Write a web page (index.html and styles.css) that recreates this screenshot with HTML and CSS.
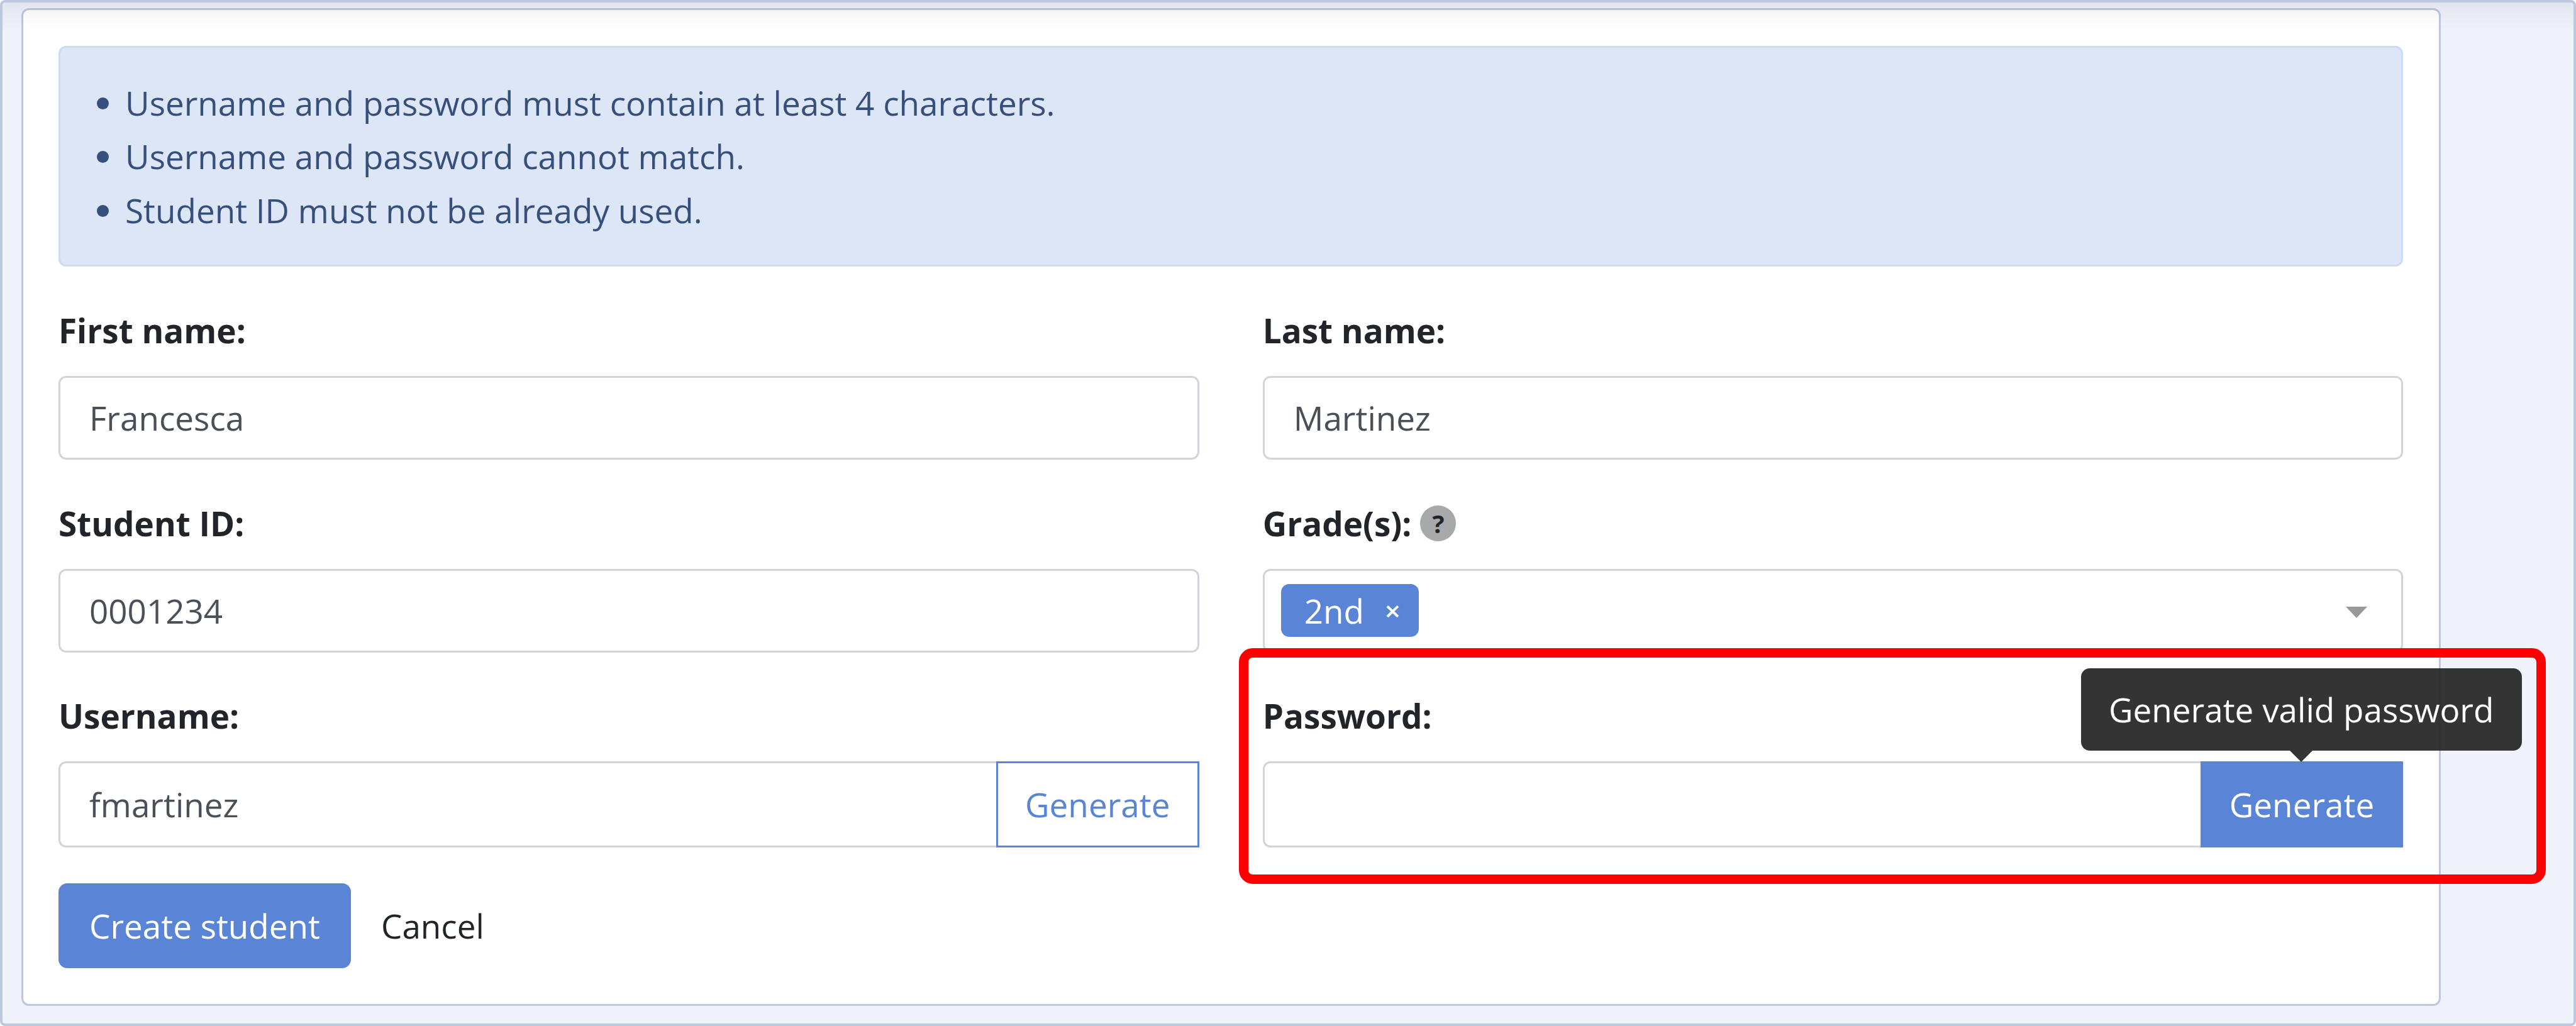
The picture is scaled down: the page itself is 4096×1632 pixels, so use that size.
FILE: index.html
```html
<!DOCTYPE html>
<html lang="en">
<head>
<meta charset="utf-8">
<title>Create student</title>
<link rel="stylesheet" href="styles.css">
</head>
<body>
<div class="frame">
  <main class="card">
    <div class="alert">
      <ul class="rules">
        <li>Username and password must contain at least 4 characters.</li>
        <li>Username and password cannot match.</li>
        <li>Student ID must not be already used.</li>
      </ul>
    </div>
    <form class="form">
      <div class="grid">
        <div class="field">
          <label class="label">First name:</label>
          <input class="input" type="text" value="Francesca">
        </div>
        <div class="field">
          <label class="label">Last name:</label>
          <input class="input" type="text" value="Martinez">
        </div>
        <div class="field">
          <label class="label">Student ID:</label>
          <input class="input" type="text" value="0001234">
        </div>
        <div class="field">
          <label class="label">Grade(s): <span class="help">?</span></label>
          <div class="select">
            <span class="chip"><span class="chip-text">2nd</span><span class="chip-x">×</span></span>
            <span class="caret"></span>
          </div>
        </div>
        <div class="field">
          <label class="label">Username:</label>
          <div class="group">
            <input class="input group-input" type="text" value="fmartinez">
            <button class="gen gen-outline" type="button">Generate</button>
          </div>
        </div>
        <div class="field">
          <label class="label">Password:</label>
          <div class="group">
            <input class="input group-input" type="text">
            <button class="gen gen-solid" type="button">Generate</button>
            <div class="tooltip">Generate valid password</div>
          </div>
        </div>
      </div>
      <div class="actions">
        <button class="create" type="button">Create student</button>
        <a class="cancel">Cancel</a>
      </div>
    </form>
  </main>
  <div class="highlight"></div>
  <div class="sheen"></div>
</div>
</body>
</html>
```
FILE: styles.css
```css
* { box-sizing: border-box; }
html, body { margin: 0; padding: 0; background: #ffffff; }
body {
  font-family: "Open Sans", "Noto Sans", "Liberation Sans", sans-serif;
  font-size: 53px;
  color: #212529;
}
.frame {
  position: relative;
  width: 4096px;
  height: 1632px;
  padding: 8.75px 0 0 29.75px;
  background: #eff2fb;
  border: 4px solid #bfc7e0;
  border-radius: 8px;
  overflow: hidden;
}
.sheen {
  position: absolute;
  left: 0;
  right: 0;
  top: 0;
  height: 44px;
  background: linear-gradient(rgba(0,0,0,.05), rgba(0,0,0,0));
  pointer-events: none;
}
.card {
  width: 3846.75px;
  height: 1587.25px;
  padding: 57px 56.25px 0;
  background: #ffffff;
  border: 3px solid #bfc7e0;
  border-radius: 12px;
}
.alert {
  height: 351px;
  margin-bottom: 60.25px;
  background: #dce6f7;
  border: 3px solid #cddcf5;
  border-radius: 12px;
  color: #364f7b;
}
.rules {
  margin: 0;
  padding: 45px 0 0 103px;
  line-height: 85.7px;
}
.grid {
  display: grid;
  grid-template-columns: 1813.5px 1813.5px;
  column-gap: 101.25px;
  row-gap: 59.5px;
}
.field { display: flex; flex-direction: column; }
.label {
  display: flex;
  align-items: center;
  gap: 14px;
  height: 84px;
  margin-bottom: 30px;
  font-weight: 700;
  line-height: 84px;
}
.help {
  display: flex;
  align-items: center;
  justify-content: center;
  width: 57px;
  height: 57px;
  border-radius: 50%;
  background: #a8a9ab;
  font-size: 40px;
  line-height: 1;
}
.input {
  display: block;
  width: 100%;
  height: 133px;
  padding: 0 46px;
  background: #ffffff;
  border: 3px solid #d1d5db;
  border-radius: 12px;
  font: inherit;
  color: #495057;
  outline: none;
}
.select {
  position: relative;
  display: flex;
  align-items: center;
  height: 133px;
  padding-left: 26px;
  border: 3px solid #d1d5db;
  border-radius: 12px;
  background: #ffffff;
}
.chip {
  display: flex;
  align-items: center;
  width: 219px;
  height: 84px;
  padding-left: 37px;
  background: #5a85d6;
  border-radius: 13px;
  color: #ffffff;
}
.chip-text { width: 128px; }
.chip-x { font-size: 44px; font-weight: 600; }
.caret {
  position: absolute;
  right: 54px;
  top: 57px;
  width: 0;
  height: 0;
  border-style: solid;
  border-width: 18px 17px 0;
  border-color: #999999 transparent transparent;
}
.group {
  position: relative;
  display: flex;
  height: 136.5px;
}
.group-input {
  flex: 1;
  min-width: 0;
  height: 100%;
  border-right: 0;
  border-radius: 12px 0 0 12px;
}
.gen {
  flex: none;
  width: 322.5px;
  height: 100%;
  padding: 0;
  border: 3px solid #5a85d6;
  border-radius: 0;
  font: inherit;
}
.gen-outline { background: #ffffff; color: #5a85d6; }
.gen-solid { background: #5a85d6; color: #ffffff; }
.tooltip {
  position: absolute;
  right: -188.5px;
  bottom: calc(100% + 17px);
  width: 701px;
  height: 131px;
  background: rgba(41,41,41,.95);
  border-radius: 14px;
  color: #ffffff;
  line-height: 131px;
  text-align: center;
}
.tooltip::after {
  content: "";
  position: absolute;
  left: 332px;
  top: 100%;
  border-style: solid;
  border-width: 18px 18px 0;
  border-color: rgba(41,41,41,.95) transparent transparent;
}
.actions {
  display: flex;
  align-items: center;
  margin-top: 57px;
}
.create {
  width: 465px;
  height: 135.5px;
  padding: 0;
  background: #5a85d6;
  border: 0;
  border-radius: 14px;
  font: inherit;
  color: #ffffff;
}
.cancel { margin-left: 48px; color: #212529; }
.highlight {
  position: absolute;
  left: 1965.5px;
  top: 1027px;
  width: 2078.25px;
  height: 375px;
  border: 15px solid #ff0000;
  border-radius: 22px;
  pointer-events: none;
}
```
